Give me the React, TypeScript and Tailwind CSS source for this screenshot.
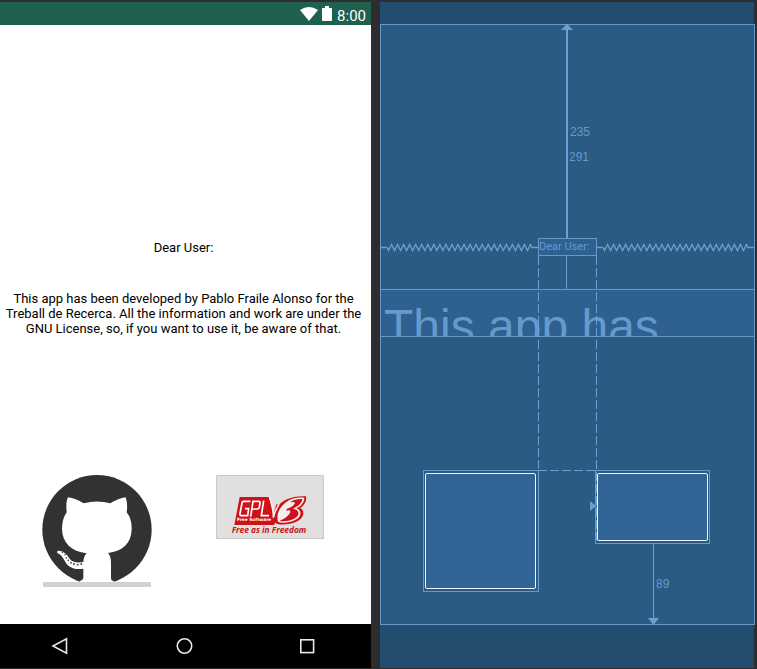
import React from "react";

function StatusBar() {
  return (
    <header className="flex h-[23px] items-center justify-end bg-[#20604f] pr-[5px] text-white">
      <svg className="mr-1 h-[14px] w-[18px]" viewBox="0 0 18 14" aria-hidden="true">
        <path d="M0 3 Q9 -3 18 3 L9 14 Z" fill="#fff" />
      </svg>
      <svg className="mr-[5px] h-[15px] w-[10px]" viewBox="0 0 10 15" aria-hidden="true">
        <path d="M3 0h4v2h2.2q.8 0 .8.8v11.4q0 .8-.8.8H.8q-.8 0-.8-.8V2.8Q0 2 .8 2H3z" fill="#fff" />
      </svg>
      <span className="pt-1 text-[15px] leading-[18px]">8:00</span>
    </header>
  );
}

function OctocatLogo() {
  return (
    <svg className="block h-[107px] w-[110px]" viewBox="36 45 330 321" aria-hidden="true">
      <circle cx="201" cy="209" r="164" fill="#333132" />
      <path
        d="M110 157 C108 138 109 122 114 112 Q137 115 161 130 Q201 119 241 130 Q265 115 287 112 Q294 132 290 157 Q306 177 305 207 C304 251 278 274 234 279 Q242 287 243 305 L243 354 Q243 362 251 363 L251 380 L150 380 L150 363 Q158 362 160 354 L160 326 C138 330 119 325 108 309 C99 296 97 286 83 280 Q79 274 84 272 C103 272 112 286 119 296 Q130 311 160 306 Q161 288 170 280 C124 274 97 249 96 207 Q96 177 110 157 Z"
        fill="#fff"
      />
      <g fill="#333132">
        <circle cx="97" cy="278" r="2" />
        <circle cx="105" cy="284" r="2.3" />
        <circle cx="109" cy="293" r="2.3" />
        <circle cx="115" cy="301" r="2.5" />
        <circle cx="123" cy="308" r="2.5" />
        <circle cx="132" cy="312" r="2.7" />
        <circle cx="143" cy="314" r="2.7" />
        <circle cx="154" cy="312" r="2.7" />
      </g>
    </svg>
  );
}

function GplLogo() {
  return (
    <svg className="block h-[64px] w-[108px]" viewBox="33 30 324 192" aria-hidden="true">
      <path d="M104 96 L192 96 L205 150 L214 118 L222 120 L208 180 L88 180 Z" fill="#cf1219" />
      <g fill="none" stroke="#fff" strokeWidth="5">
        <path d="M136 109 H116 Q112 109 111 114 L105 145 Q104 152 109 152 H128 L131 131 H120" />
        <path d="M137 155 L144 109 H161 Q166 109 165 114 L163 127 Q162 132 157 132 H142" />
        <path d="M176 107 L169 152 H192" />
      </g>
      <path
        d="M303 94 C270 92 240 101 222 119 C203 138 197 163 211 174 C229 184 276 178 291 157 C299 144 294 134 286 129 C299 121 306 107 303 94 Z"
        fill="#cf1219"
      />
      <path
        d="M298 98 C276 96 256 101 240 114 C221 130 214 149 219 170 C236 178 272 171 284 154 C290 143 285 134 274 130 C289 123 298 111 298 98 Z"
        fill="#f4eeee"
      />
      <path
        d="M292 102 C276 101 262 106 255 112 Q268 109 270 114 C267 122 256 128 246 131 L243 137 Q257 134 256 141 C252 153 237 162 224 167 C242 172 271 165 279 151 C284 140 276 133 264 131 C279 125 291 114 292 102 Z"
        fill="#cf1219"
      />
      <path d="M193 96 Q206 124 205 158 Q209 138 222 118" fill="none" stroke="#f4eeee" strokeWidth="5" />
      <text x="96" y="167" fill="#fff" fontSize="13" fontWeight="700" fontFamily="'DejaVu Sans', sans-serif">
        Free Software
      </text>
      <text x="80" y="205" fill="#c4161c" fontSize="25" fontWeight="700" fontStyle="italic" fontFamily="'Open Sans', sans-serif">
        Free as in Freedom
      </text>
    </svg>
  );
}

function NavigationBar() {
  return (
    <nav className="flex h-11 items-center justify-between bg-black pl-[51px] pr-[55px]">
      <button type="button" aria-label="Back">
        <svg className="block size-[18px]" viewBox="0 0 18 18" fill="none" stroke="#e8e8e8" strokeWidth="1.6">
          <path d="M15.500 1.800V16.200L2 9Z" />
        </svg>
      </button>
      <button type="button" aria-label="Home">
        <svg className="block size-[18px]" viewBox="0 0 18 18" fill="none" stroke="#e8e8e8" strokeWidth="1.6">
          <circle cx="9.500" cy="9" r="7.2" />
        </svg>
      </button>
      <button type="button" aria-label="Recent apps">
        <svg className="block size-[18px]" viewBox="0 0 18 18" fill="none" stroke="#e8e8e8" strokeWidth="1.6">
          <rect x="2.8" y="2.8" width="12.8" height="12.8" />
        </svg>
      </button>
    </nav>
  );
}

function PhonePreview() {
  return (
    <section className="flex flex-col bg-white font-['Roboto',sans-serif] text-black">
      <StatusBar />
      <main className="flex grow flex-col pr-1 pt-[215px] text-center text-[13px] leading-[15px]">
        <h1>Dear User:</h1>
        <p className="mt-9">
          This app has been developed by Pablo Fraile Alonso for the Treball de Recerca. All the
          information and work are under the GNU License, so, if you want to use it, be aware of that.
        </p>
        <div className="mt-[139px] flex items-start justify-center gap-16 pb-9 pr-[2px]">
          <button type="button" aria-label="GitHub" className="flex flex-col items-center">
            <OctocatLogo />
            <span className="h-[5px] w-[108px] rounded-[1px] bg-[#d2d2d2]" />
          </button>
          <button
            type="button"
            aria-label="GPL v3 license"
            className="rounded-[2px] bg-[#e0e0e0] shadow-[inset_0_0_0_1px_#c8c8c8,inset_0_-1px_0_#999]"
          >
            <GplLogo />
          </button>
        </div>
      </main>
      <NavigationBar />
    </section>
  );
}

const TEETH = 24;

/* One spring: a short lead, a run of teeth, and a short tail. */
function spring(start: number, lead: number, end: number, tail: number) {
  const from = start + lead;
  const step = (end - tail - from) / TEETH;
  let d = `M${start} 223.5H${from}`;
  for (let i = 0; i < TEETH; i++) {
    const x = from + i * step;
    d += `L${x + step / 4} 226.5L${x + (step * 3) / 4} 220.5`;
  }
  return `${d}L${end - tail} 223.5H${end}`;
}

function Constraints() {
  return (
    <svg className="absolute left-0 top-0 h-[601px] w-[375px]" viewBox="0 0 375 601" fill="none" stroke="#6ba0d4" aria-hidden="true">
      <path d="M187 3V214" strokeWidth="2" />
      <path d="M186.5 232V265M273.5 520V598" />
      <path d={spring(0, 7, 158, 6)} strokeWidth="1.3" />
      <path d={spring(217, 6, 375, 7)} strokeWidth="1.3" />
      <path d="M158.5 232V567M216.5 232V519M158 446.5H216" strokeDasharray="9 3" />
      <g fill="#6ba0d4" stroke="none">
        <path d="M187 0L193 6H181Z" />
        <path d="M273.5 601L268 594H279Z" />
        <path d="M216 482L210 477V487Z" />
      </g>
    </svg>
  );
}

function Blueprint() {
  return (
    <section className="flex flex-col bg-[#2b5b83] font-['Liberation_Sans',sans-serif] text-[#6699cc]">
      <div className="mr-px h-[22px] bg-[#224d6e] shadow-[1px_0_0_#2d2d2f]" />
      <div className="relative grow overflow-hidden border border-[#6499ca]">
        <div className="absolute -left-px -top-px h-[601px] w-[375px]">
          <div className="absolute left-[158px] top-[214px] h-[18px] w-[59px] border border-[#6499ca] bg-[#2e618f] font-['Roboto',sans-serif] text-[11px] leading-4">
            Dear User:
          </div>
          <div className="absolute left-0 top-[265px] h-12 w-[375px] overflow-hidden whitespace-nowrap border border-[#6499ca] bg-[#2e618f] pl-[3px] pt-[9px] text-[48px] leading-[56px]">
            This app has
          </div>
          <div className="absolute left-[43px] top-[446px] h-[122px] w-[116px] border border-[#6499ca] px-px py-[2px]">
            <div className="h-full w-[111px] rounded-[2px] border border-[#eef5fc] bg-[#326595]" />
          </div>
          <div className="absolute left-[215px] top-[446px] h-[74px] w-[115px] border border-[#6499ca] px-px py-[2px]">
            <div className="h-full w-[111px] rounded-[2px] border border-[#eef5fc] bg-[#326595]" />
          </div>
          <Constraints />
          <span className="absolute left-[190px] top-[101px] text-[12px] leading-[14px]">235</span>
          <span className="absolute left-[189px] top-[126px] text-[12px] leading-[14px]">291</span>
          <span className="absolute left-[276px] top-[553px] text-[12px] leading-[14px]">89</span>
        </div>
      </div>
      <div className="mr-px h-[43px] bg-[#224d6e] shadow-[1px_0_0_#2d2d2f]" />
    </section>
  );
}

export default function App() {
  return (
    <div className="grid min-h-screen grid-cols-[371fr_375fr] gap-[9px] bg-[#2d2d2f] pb-px pr-[2px] pt-[2px]">
      <PhonePreview />
      <Blueprint />
    </div>
  );
}
